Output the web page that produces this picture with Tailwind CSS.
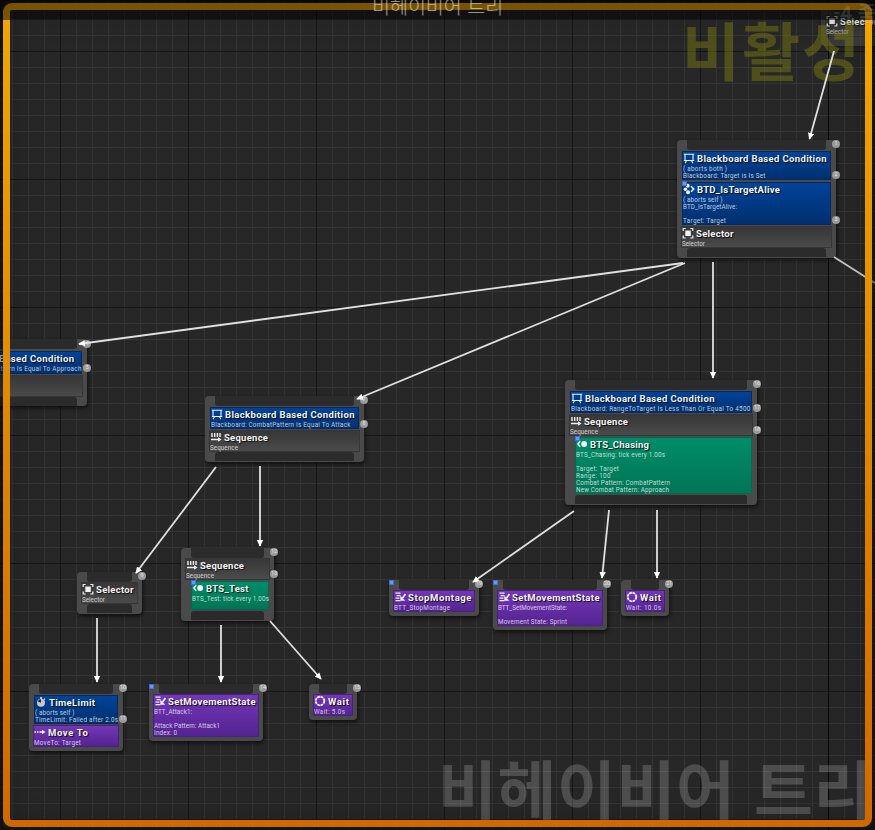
<!DOCTYPE html>
<html lang="ko">
<head>
<meta charset="utf-8">
<title>비헤이비어 트리</title>
<script src="https://cdn.jsdelivr.net/npm/@tailwindcss/browser@4"></script>
</head>
<body class="bg-[#272727]">
<main class="relative w-[875px] h-[830px] overflow-hidden bg-[#272727] font-['Roboto','Noto_Sans_CJK_KR',sans-serif]">
  <!-- canvas grid -->
  <svg class="absolute inset-0" width="875" height="830" shape-rendering="crispEdges">
    <defs>
      <pattern id="minor" x="12" y="3" width="16" height="16" patternUnits="userSpaceOnUse"><path d="M0 0h16v1H1v15H0z" fill="#343434"/></pattern>
      <pattern id="major" x="60" y="51" width="128" height="128" patternUnits="userSpaceOnUse"><path d="M0 0h128v1H1v127H0z" fill="#161616"/></pattern>
    </defs>
    <rect width="875" height="830" fill="url(#minor)"/>
    <rect width="875" height="830" fill="url(#major)"/>
    <path d="M828 0h1v830h-1z" fill="#050505"/>
  </svg>
  <div class="absolute inset-0 shadow-[inset_0_0_40px_rgba(0,0,0,0.35)]"></div>

  <!-- watermarks -->
  <div class="absolute left-[438px] top-[738px] whitespace-nowrap text-[64px] leading-[96px] font-bold text-white/18 font-['Noto_Sans_CJK_KR',sans-serif]" data-fit="431" data-font="700 64px 'Noto Sans CJK KR'">비헤이비어 트리</div>

  <div id="nodes"></div>

  <div class="absolute left-[682px] top-0 whitespace-nowrap text-[63px] leading-[96px] font-bold text-[#808010]/45 font-['Noto_Sans_CJK_KR',sans-serif]" data-fit="178" data-font="700 63px 'Noto Sans CJK KR'">비활성</div>

  <svg class="absolute inset-0" width="875" height="830" fill="none" stroke="#e0e0e0" stroke-width="1.8">
    <defs><marker id="tip" viewBox="0 0 7 7" refX="6" refY="3.5" markerWidth="7" markerHeight="7" markerUnits="userSpaceOnUse" orient="auto"><path d="M0 .3 6.800 3.500 0 6.700z" fill="#fff" stroke="none"/></marker></defs>
    <g marker-end="url(#tip)">
      <path d="M834 51 809.500 139"/><path d="M683 263 79 344"/><path d="M685 263 357 399"/><path d="M713 262V378"/>
      <path d="M216 467 136 573"/><path d="M260 466V546"/><path d="M97 618V682"/><path d="M221 625V682"/><path d="M270 621 321 679"/>
      <path d="M574 511 473 582"/><path d="M609 510 602 578"/><path d="M657 510V578"/>
    </g>
    <path d="M834 257 875 283" stroke="#c4c4c4"/>
  </svg>

  <!-- frame -->
  <svg class="absolute inset-0" width="875" height="830" fill="none">
    <defs><linearGradient id="amber" gradientUnits="userSpaceOnUse" x1="0" y1="0" x2="0" y2="830"><stop stop-color="#f0a800"/><stop offset="1" stop-color="#d06800"/></linearGradient></defs>
    <path d="M0 0H875V830H0zM9 3a6 6 0 0 0-6 6V821a6 6 0 0 0 6 6H866a6 6 0 0 0 6-6V9a6 6 0 0 0-6-6z" fill="#000" fill-opacity=".4" fill-rule="evenodd"/>
    <rect x="6.500" y="6.500" width="862" height="817" rx="5.500" stroke="url(#amber)" stroke-width="7"/>
  </svg>

  <!-- title bar -->
  <header class="absolute inset-x-0 top-0 h-5 bg-black/50"></header>
  <div class="absolute left-[372px] top-[-9px] whitespace-nowrap text-[19.600px] leading-[29px] font-light text-white/55 font-['Noto_Sans_CJK_KR',sans-serif]" data-fit="130" data-font="300 19.6px 'Noto Sans CJK KR'">비헤이비어 트리</div>
  <div class="absolute left-[833px] top-[-2px] whitespace-nowrap text-[20px] leading-[29px] font-bold text-white/15 font-['Noto_Sans_CJK_KR',sans-serif]">-4 줌</div>
</main>

<script>
const icon = {
  board: '<path d="M2 2.200h8v6.300H2zM.8 2.200h10.400M.8 8.500h10.400M3.500 8.500 2.200 11.300M8.500 8.500l1.300 2.800" stroke-width="1.100"/>',
  decor: '<path d="M8 3.300 10.700 6 8 8.700" stroke-width="1.600"/><g fill="currentColor" stroke="none"><circle cx="4.700" cy="2.800" r="2"/><circle cx="2.400" cy="6.200" r="1.700"/><circle cx="5" cy="9.300" r="2"/></g>',
  selector: '<path d="M1.200 4V1.500H3.700M8.300 1.500h2.500V4M10.800 8.500V11H8.300M3.700 11H1.200V8.500" stroke-width="1.200"/><path d="M3.300 3.500h5.500V9H3.300z" fill="currentColor" stroke="none"/>',
  sequence: '<path d="M2 2v4M4.700 2v4M7.400 2v4M10 2v4" stroke-width="1.400"/><path d="M1 8.500h8" stroke-width="1.500"/><path d="M8 6.300 11.500 8.500 8 10.700z" fill="currentColor" stroke="none"/>',
  service: '<path d="M4.300 3.300 1.800 6l2.500 2.700" stroke-width="1.400"/><circle cx="8.200" cy="6" r="2.900" fill="currentColor" stroke="none"/><path d="M5.300 6h2"/>',
  task: '<path d="M1.500 2.200h5M2.500 4.700h4M1.500 7.200h4M1.500 9.700h5" stroke-width="1.200"/><path d="M11.500 3 8.500 7" stroke-width="1.600"/><path d="M6.300 4.700v5h5z" fill="currentColor" stroke="none"/>',
  wait: '<circle cx="6" cy="6" r="4.300" stroke-width="1.900" stroke-dasharray="2.650 .73"/>',
  move: '<path d="M.5 6h1.500M3 6h1.500M5.500 6H9" stroke-width="1.500"/><path d="M8 3.700 11.500 6 8 8.300z" fill="currentColor" stroke="none"/>',
  timer: '<circle cx="6" cy="6.800" r="4" fill="#c9c9c9" stroke="none"/><path d="M6 6.800V3.300a3.500 3.500 0 0 0-3.200 2.300z" fill="#222" stroke="none"/><path d="M6 1v2M9 2.700l.8.800" stroke-width="1.500"/>'
};
const tone = {
  blue: 'bg-linear-to-b from-[#00439a] to-[#00306f] border-[#06285a]',
  gray: 'bg-linear-to-b from-[#373737] to-[#4b4b4b] border-[#363636]',
  green: 'bg-linear-to-b from-[#008d69] to-[#007556] border-[#08684e]',
  purple: 'bg-linear-to-b from-[#7337b8] to-[#542391] border-[#48217a]'
};
const cond = ['Blackboard Based Condition', 129.5];
const sel = ['gray', 'selector', ['Selector', 37.5], [['Selector', 23]], 4, 22];
const seq = ['gray', 'sequence', ['Sequence', 44], [['Sequence', 28]], 4, 22];
/* node: x, y, w, h, bottom pin, marker, badges [[n, dy]], rows [[tone, icon, title, subs, left, height, gap, right, flag]] */
const nodes = [
  [821, 5, 90, 41, 0, 0, [], [['gray','',['',0],[],4,22]]],
  [677, 140, 159, 118, 1, 0, [[1,4],[2,35],[3,80]], [
    ['blue','board',cond,[['( aborts both )',44],['Blackboard: Target is Is Set',82.5]],5,29,1],
    ['blue','decor',['BTD_IsTargetAlive',83],[['( aborts self )',39.5],['BTD_IsTargetAlive:',54],['',0],['Target: Target',43]],5,43,2,5,1],
    ['gray','selector',['Selector',37.5],[['Selector',23]],4,22,1]]],
  [-85, 339, 172, 67, 1, 0, [[4,4.5],[5,29]], [
    ['blue','board',cond,[['Blackboard: CombatPattern Is Equal To Approach',151]],14.5,23,2,5],
    ['gray','',['',0],[],4,22,1]]],
  [205, 396, 159, 66, 1, 0, [[7,4],[8,28]], [
    ['blue','board',cond,[['Blackboard: CombatPattern Is Equal To Attack',139.5]],5,22,1],
    ['gray','sequence',['Sequence',44],[['Sequence',28]],4,22,1]]],
  [565, 380, 192, 125, 1, 0, [[16,4],[17,28],[18,50]], [
    ['blue','board',cond,[['Blackboard: RangeToTarget Is Less Than Or Equal To 4500',179.5]],5,22,1],
    ['gray','sequence',['Sequence',44],[['Sequence',28]],4,22,1],
    ['green','service',['BTS_Chasing',59],[['BTS_Chasing: tick every 1.00s',89],['',0],['Target: Target',43],['Range: 100',34.5],['Combat Pattern: CombatPattern',94],['New Combat Pattern: Approach',93]],10,57,1,5,1]]],
  [77, 572, 65, 42, 1, 0, [[9,4]], [sel]],
  [181, 548, 93, 73, 1, 0, [[12,4],[13,26]], [seq,
    ['green','service',['BTS_Test',42.5],[['BTS_Test: tick every 1.00s',77]],10,29,1,5,1]]],
  [29, 684, 94, 67, 0, 0, [[10,4],[11,35]], [
    ['blue','timer',['TimeLimit',46],[['( aborts self )',39.5],['TimeLimit: Failed after 2.0s',83]],5,29,1],
    ['purple','move',['Move To',40],[['MoveTo: Target',47]],4,22,1]]],
  [149, 684, 114, 57, 0, 1, [[14,4]], [['purple','task',['SetMovementState',87.5],[['BTT_Attack1:',38],['',0],['Attack Pattern: Attack1',66],['Index: 0',23]],4,43]]],
  [309, 684, 48, 36, 0, 0, [[15,4]], [['purple','wait',['Wait',21],[['Wait: 5.0s',31]],4,22]]],
  [389, 580, 90, 36, 0, 1, [[19,4]], [['purple','task',['StopMontage',63.5],[['BTT_StopMontage',56]],4,22]]],
  [493, 580, 114, 50, 0, 1, [[20,4]], [['purple','task',['SetMovementState',87.5],[['BTT_SetMovementState:',69],['',0],['Movement State: Sprint',69]],4,36]]],
  [621, 580, 48, 36, 0, 0, [[21,4]], [['purple','wait',['Wait',21],[['Wait: 10.0s',35]],4,22]]]
];

/* tracking that brings a label to its width, measured off-DOM */
const pen = document.createElement('canvas').getContext('2d');
const track = (text, width, font) => {
  pen.font = font;
  return ((width - pen.measureText(text).width) / Math.max(1, [...text].length - 1)).toFixed(3);
};
const flag = (cls) => `<i class="${cls} size-[5px] bg-[#6c96f0] border border-[#3f6fdc]"></i>`;
const glyph = (name) => `<svg class="-mt-[1px] mr-[2px] size-[12px] shrink-0 text-[#f2f2f2]" viewBox="0 0 12 12" fill="none" stroke="currentColor">${icon[name]}</svg>`;
const titleText = ([s, w]) => `<span class="whitespace-nowrap text-[9.500px] leading-[15px] font-bold text-[#f4f4f4] [text-shadow:1px_1px_1px_rgba(0,0,0,0.9)]" style="letter-spacing:${track(s, w, 'bold 9.5px Roboto')}px">${s}</span>`;
const subText = ([s, w]) => `<div class="flex h-[7px] items-center">${s ? `<span class="whitespace-nowrap text-[6.300px] leading-[7px] text-white/75" style="letter-spacing:${track(s, w, '6.3px Roboto')}px">${s}</span>` : ''}</div>`;

document.getElementById('nodes').innerHTML = nodes.map(([x,y,w,h,foot,mark,badges,rows]) => `
<section class="absolute flex flex-col rounded-[4px] bg-[#4a4a4a] shadow-[1px_2px_4px_rgba(0,0,0,0.65)] ${x === 821 ? 'opacity-50' : ''}" style="left:${x}px;top:${y}px;width:${w}px;height:${h}px">
  <div class="mx-[10px] h-[10px] shrink-0 rounded-b-[3px] bg-[#2b2b2b]"></div>
  ${rows.map(([t,ic,title,subs,left,rh,gap,right,fl]) => `
  <div class="relative shrink-0 border ${tone[t]}" style="margin:${gap||0}px ${right||left}px 0 ${left}px;height:${rh}px">
    ${fl ? flag('absolute -left-[1px] -top-[2px]') : ''}
    ${ic ? `<div class="-mt-px flex h-[15px] items-center">${glyph(ic)}${titleText(title)}</div>` : ''}
    ${subs.map(subText).join('')}
  </div>`).join('')}
  ${foot ? '<div class="mx-[10px] mb-px mt-auto h-[9px] shrink-0 rounded-t-[3px] bg-[#2b2b2b]"></div>' : ''}
  ${mark ? flag('absolute left-0 top-0') : ''}
  ${badges.map(([n,dy]) => `<b class="absolute -right-[4px] flex size-[8px] items-center justify-center rounded-full bg-[#9b9b9b] text-[5.500px] font-normal leading-none text-[#e8e8e8]" style="top:${dy-4}px">${n}</b>`).join('')}
</section>`).join('') + `
<div class="absolute left-[826px] top-[14px] opacity-85">
  <div class="flex h-[15px] items-center">${glyph('selector')}${titleText(['Selector', 37.5])}</div>
  ${subText(['Selector', 23])}
</div>`;

document.querySelectorAll('[data-fit]').forEach(e => {
  e.style.letterSpacing = track(e.textContent, +e.dataset.fit, e.dataset.font) + 'px';
});
</script>
</body>
</html>
